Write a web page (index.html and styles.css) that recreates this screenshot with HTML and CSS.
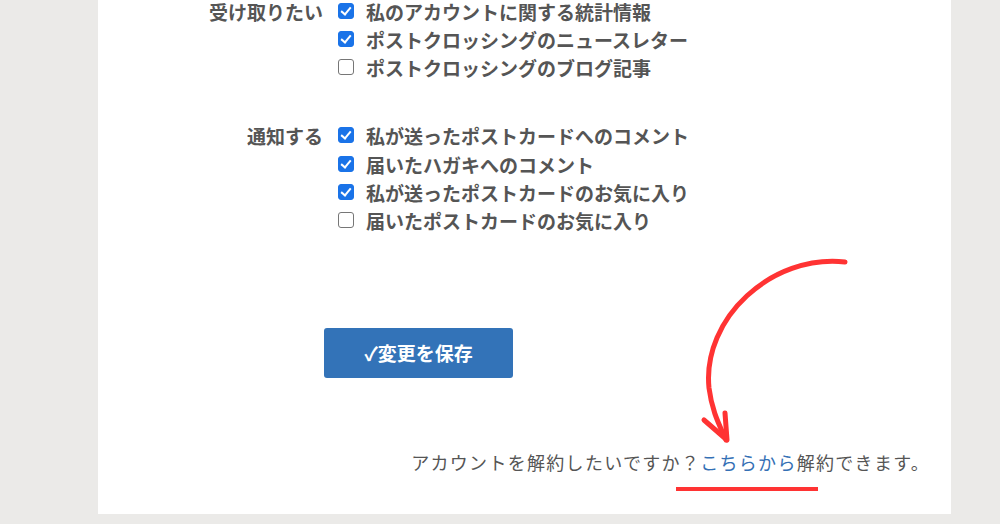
FILE: index.html
```html
<!DOCTYPE html>
<html lang="ja">
<head>
    <meta charset="UTF-8">
    <meta name="viewport" content="width=device-width, initial-scale=1.0">
    <title>設定</title>
    <link rel="stylesheet" href="styles.css">
</head>
<body>
    <div class="panel">
        <div class="field receive">
            <div class="field-label">受け取りたい</div>
            <div class="options">
                <label class="option"><input type="checkbox" checked>私のアカウントに関する統計情報</label>
                <label class="option"><input type="checkbox" checked>ポストクロッシングのニュースレター</label>
                <label class="option"><input type="checkbox">ポストクロッシングのブログ記事</label>
            </div>
        </div>
        <div class="field notify">
            <div class="field-label">通知する</div>
            <div class="options">
                <label class="option"><input type="checkbox" checked>私が送ったポストカードへのコメント</label>
                <label class="option"><input type="checkbox" checked>届いたハガキへのコメント</label>
                <label class="option"><input type="checkbox" checked>私が送ったポストカードのお気に入り</label>
                <label class="option"><input type="checkbox">届いたポストカードのお気に入り</label>
            </div>
        </div>
        <div class="actions">
            <button class="save-button">✓変更を保存</button>
        </div>
        <p class="close-account">アカウントを解約したいですか？<a href="#">こちらから</a>解約できます。</p>

        <svg class="annotation" viewBox="98 0 853 514" width="853" height="514">
            <path d="M845 262 C 772 254 702 318 709 388 C 712 412 720 426 726 440" fill="none" stroke="#ff3333" stroke-width="5" stroke-linecap="round"/>
            <path d="M704 420 L727 440 L725 413" fill="none" stroke="#ff3333" stroke-width="5" stroke-linecap="round" stroke-linejoin="round"/>
            <path d="M676 489 L818 489" stroke="#ff3333" stroke-width="4"/>
        </svg>
    </div>
</body>
</html>
```

FILE: styles.css
```css
* {
    margin: 0;
    padding: 0;
    box-sizing: border-box;
}
body {
    font-family: "Noto Sans CJK JP", "Noto Sans", sans-serif;
    background-color: #ebeae8;
    color: #555;
    padding-left: 98px;
    height: 524px;
    overflow: hidden;
}
.panel {
    position: relative;
    display: flow-root;
    width: 853px;
    height: 514px;
    background-color: #fff;
}
.field {
    display: flex;
    font-size: 19px;
    font-weight: bold;
    line-height: 28px;
}
.receive {
    margin-top: -2px;
}
.field-label {
    width: 225px;
    text-align: right;
}
.options {
    display: flex;
    flex-direction: column;
    margin-left: 15px;
}
.option {
    display: flex;
    align-items: center;
    height: 28px;
}
.notify {
    margin-top: 40px;
}
.notify .option {
    height: 28.4px;
}
.option input {
    appearance: none;
    width: 16px;
    height: 16px;
    margin-right: 12px;
    border: 1px solid #767676;
    border-radius: 3px;
    background-color: #fff;
    position: relative;
    top: -1px;
}
.option input:checked {
    background-color: #1a73e8;
    border-color: #1a73e8;
}
.option input:checked::after {
    content: "";
    position: absolute;
    left: 4px;
    top: 1px;
    width: 4px;
    height: 8px;
    border: solid #fff;
    border-width: 0 2.5px 2.5px 0;
    transform: rotate(40deg);
}
.actions {
    margin-top: 92px;
    padding-left: 226px;
}
.save-button {
    width: 189px;
    height: 50px;
    border: none;
    border-radius: 3px;
    background-color: #3373b8;
    color: #fff;
    font-family: inherit;
    font-size: 19px;
    font-weight: bold;
}
.close-account {
    margin-top: 70px;
    padding-right: 21px;
    text-align: right;
    font-size: 18px;
    line-height: 28px;
    letter-spacing: 1.3px;
}
.close-account a {
    color: #3470b5;
    text-decoration: none;
}
.annotation {
    position: absolute;
    left: 0;
    top: 0;
    pointer-events: none;
}
```
